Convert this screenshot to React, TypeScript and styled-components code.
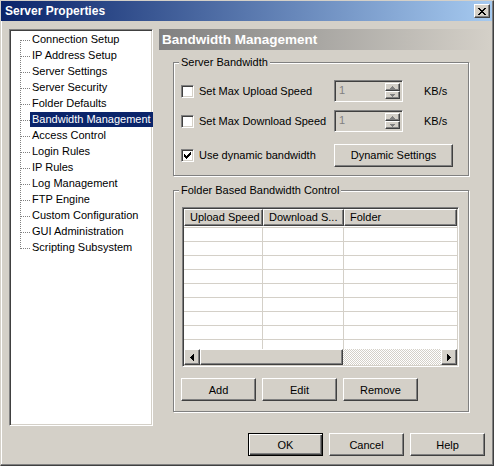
import React from "react";
import styled, { createGlobalStyle, css } from "styled-components";

const GlobalStyle = createGlobalStyle`
  html, body {
    margin: 0;
    padding: 0;
    background: #d4d0c8;
  }
  body {
    font-family: "Liberation Sans", Arial, sans-serif;
    font-size: 11px;
    color: #000;
  }
  * {
    box-sizing: border-box;
  }
`;

const raised = css`
  border: 1px solid;
  border-color: #fff #404040 #404040 #fff;
  box-shadow: inset -1px -1px 0 #808080, inset 1px 1px 0 #d4d0c8;
`;

const sunken = css`
  border: 1px solid;
  border-color: #808080 #fff #fff #808080;
  box-shadow: inset 1px 1px 0 #404040, inset -1px -1px 0 #d4d0c8;
`;

const Window = styled.div`
  width: 494px;
  height: 466px;
  display: flex;
  flex-direction: column;
  background: #d4d0c8;
  border: 1px solid;
  border-color: #d4d0c8 #404040 #404040 #d4d0c8;
  box-shadow: inset -1px -1px 0 #808080, inset 1px 1px 0 #fff;
`;

const TitleBar = styled.div`
  height: 20px;
  margin-right: 1px;
  display: flex;
  align-items: center;
  justify-content: space-between;
  padding: 0 2px 0 4px;
  background: linear-gradient(to right, #0a246a, #a6caf0);
  color: #fff;
  font-weight: bold;
  font-size: 12px;
`;

const CloseButton = styled.div`
  width: 16px;
  height: 14px;
  display: flex;
  align-items: center;
  justify-content: center;
  background: #d4d0c8;
  ${raised};
`;

const Body = styled.div`
  display: flex;
  gap: 6px;
  height: 397px;
  margin-top: 8px;
  padding: 0 2px 0 8px;
`;

const Tree = styled.div`
  width: 144px;
  height: 100%;
  background: #fff;
  padding: 2px 0 0 2px;
  ${sunken};
`;

const TreeItem = styled.div<{ $first?: boolean; $last?: boolean }>`
  position: relative;
  height: 16px;
  padding-left: 18px;
  display: flex;
  align-items: flex-start;

  &::before {
    content: "";
    position: absolute;
    left: 9px;
    top: 8px;
    width: 9px;
    height: 1px;
    background: repeating-linear-gradient(to right, #808080 0 1px, transparent 1px 2px);
  }

  &::after {
    content: "";
    position: absolute;
    left: 8px;
    top: ${(p) => (p.$first ? "8px" : "0")};
    height: ${(p) => (p.$last ? "9px" : p.$first ? "8px" : "16px")};
    width: 1px;
    background: repeating-linear-gradient(to bottom, #808080 0 1px, transparent 1px 2px);
  }
`;

const TreeLabel = styled.span<{ $selected?: boolean }>`
  height: 15px;
  line-height: 15px;
  padding: 0 2px;
  white-space: nowrap;
  background: ${(p) => (p.$selected ? "#0a246a" : "transparent")};
  color: ${(p) => (p.$selected ? "#fff" : "#000")};
`;

const Pane = styled.div`
  width: 331px;
  display: flex;
  flex-direction: column;
`;

const PaneHeader = styled.div`
  height: 21px;
  line-height: 21px;
  padding-left: 3px;
  background: linear-gradient(to right, #808080, #d4d0c8);
  color: #fff;
  font-weight: bold;
  font-size: 13.5px;
`;

const Group = styled.div<{ $height: number; $top: number; $inset: number }>`
  position: relative;
  width: 296px;
  height: ${(p) => p.$height}px;
  margin: ${(p) => p.$top}px 0 0 14px;
  border: 1px solid #808080;
  box-shadow: inset 1px 1px 0 #fff, 1px 1px 0 #fff;
  padding: ${(p) => p.$inset}px 0 0 7px;
`;

const GroupCaption = styled.span`
  position: absolute;
  top: -7px;
  left: 5px;
  padding: 0 2px;
  line-height: 13px;
  background: #d4d0c8;
`;

const SettingRow = styled.div<{ $gap?: number }>`
  display: flex;
  align-items: center;
  height: 22px;
  margin-top: ${(p) => p.$gap ?? 0}px;
`;

const CheckField = styled.label`
  width: 153px;
  display: flex;
  align-items: center;
  gap: 5px;
  white-space: nowrap;
`;

const CheckBox = styled.span`
  width: 13px;
  height: 13px;
  background: #fff;
  display: flex;
  align-items: center;
  justify-content: center;
  ${sunken};
`;

const SpinField = styled.div`
  width: 69px;
  height: 22px;
  display: flex;
  justify-content: space-between;
  padding: 2px;
  background: #d4d0c8;
  color: #808080;
  ${sunken};
`;

const SpinValue = styled.span`
  padding-left: 2px;
  line-height: 15px;
`;

const SpinButtons = styled.div`
  display: flex;
  flex-direction: column;
`;

const SpinButton = styled.div`
  width: 15px;
  height: 9px;
  display: flex;
  align-items: center;
  justify-content: center;
  ${raised};
`;

const Unit = styled.span`
  margin-left: 21px;
`;

const Button = styled.button<{ $width?: number; $default?: boolean }>`
  width: ${(p) => p.$width ?? 75}px;
  height: 23px;
  padding: 0;
  font: inherit;
  color: #000;
  background: #d4d0c8;
  ${(p) =>
    p.$default
      ? css`
          border: 1px solid #000;
          box-shadow: inset 1px 1px 0 #fff, inset -1px -1px 0 #404040, inset -2px -2px 0 #808080;
        `
      : raised};
`;

const ListView = styled.div`
  width: 277px;
  height: 160px;
  margin-left: 1px;
  padding: 1px;
  background: #fff;
  display: flex;
  flex-direction: column;
  overflow: hidden;
  ${sunken};
`;

const ListHeader = styled.div`
  display: flex;
  height: 17px;
  flex-shrink: 0;
`;

const HeaderCell = styled.div<{ $width?: number }>`
  ${(p) => (p.$width ? `width: ${p.$width}px;` : "flex: 1;")}
  height: 17px;
  line-height: 15px;
  padding-left: 5px;
  background: #d4d0c8;
  white-space: nowrap;
  overflow: hidden;
  ${raised};
`;

const ListBody = styled.div`
  flex: 1;
  overflow: hidden;
  padding-top: 1px;
`;

const ListRow = styled.div`
  display: flex;
  height: 14px;
  border-top: 1px solid #d4d0c8;
`;

const ListCell = styled.div<{ $width?: number }>`
  ${(p) => (p.$width ? `width: ${p.$width}px; border-right: 1px solid #d4d0c8;` : "flex: 1;")}
`;

const ScrollBar = styled.div`
  display: flex;
  height: 16px;
  flex-shrink: 0;
`;

const ScrollArrow = styled.div`
  width: 16px;
  height: 16px;
  display: flex;
  align-items: center;
  justify-content: center;
  background: #d4d0c8;
  ${raised};
`;

const ScrollThumb = styled.div`
  width: 143px;
  height: 16px;
  background: #d4d0c8;
  ${raised};
`;

const ScrollTrack = styled.div`
  flex: 1;
  background: repeating-conic-gradient(#fff 0 25%, #d4d0c8 0 50%) 0 0 / 2px 2px;
`;

const ButtonRow = styled.div`
  display: flex;
  gap: 6px;
  margin-top: 11px;
`;

const Footer = styled.div`
  display: flex;
  justify-content: flex-end;
  gap: 6px;
  margin-top: 7px;
  padding-right: 8px;
`;

const CheckMark = () => (
  <svg width="7" height="7" viewBox="0 0 7 7" shapeRendering="crispEdges">
    <path
      d="M0 2h1v1h1v1h1v-1h1v-1h1v-1h1v-1h1v3h-1v1h-1v1h-1v1h-1v1h-1v-1h-1v-1h-1v-1h-1z"
      fill="#000"
    />
  </svg>
);

const CloseGlyph = () => (
  <svg width="8" height="7" viewBox="0 0 8 7" shapeRendering="crispEdges">
    <path
      d="M0 0h2v1h1v1h2v-1h1v-1h2v1h-1v1h-1v1h-1v1h1v1h1v1h1v1h-2v-1h-1v-1h-2v1h-1v1h-2v-1h1v-1h1v-1h1v-1h-1v-1h-1v-1h-1z"
      fill="#000"
    />
  </svg>
);

const Arrow = ({ dir, color }: { dir: "left" | "right" | "up" | "down"; color: string }) => {
  const shapes = {
    left: { w: 4, h: 7, d: "M4 0v7h-1v-1h-1v-1h-1v-1h-1v-1h1v-1h1v-1h1v-1z" },
    right: { w: 4, h: 7, d: "M0 0h1v1h1v1h1v1h1v1h-1v1h-1v1h-1v1h-1z" },
    up: { w: 5, h: 3, d: "M2 0h1v1h1v1h1v1h-5v-1h1v-1h1z" },
    down: { w: 5, h: 3, d: "M0 0h5v1h-1v1h-1v1h-1v-1h-1v-1h-1z" },
  }[dir];
  return (
    <svg width={shapes.w} height={shapes.h} viewBox={`0 0 ${shapes.w} ${shapes.h}`} shapeRendering="crispEdges">
      <path d={shapes.d} fill={color} />
    </svg>
  );
};

const treeItems = [
  "Connection Setup",
  "IP Address Setup",
  "Server Settings",
  "Server Security",
  "Folder Defaults",
  "Bandwidth Management",
  "Access Control",
  "Login Rules",
  "IP Rules",
  "Log Management",
  "FTP Engine",
  "Custom Configuration",
  "GUI Administration",
  "Scripting Subsystem",
];

const speedRows = [
  { label: "Set Max Upload Speed", gap: 0 },
  { label: "Set Max Download Speed", gap: 8 },
];

const Spinner = () => (
  <SpinField>
    <SpinValue>1</SpinValue>
    <SpinButtons>
      <SpinButton>
        <Arrow dir="up" color="#808080" />
      </SpinButton>
      <SpinButton>
        <Arrow dir="down" color="#808080" />
      </SpinButton>
    </SpinButtons>
  </SpinField>
);

export default function App() {
  return (
    <>
      <GlobalStyle />
      <Window>
        <TitleBar>
          <span>Server Properties</span>
          <CloseButton>
            <CloseGlyph />
          </CloseButton>
        </TitleBar>

        <Body>
          <Tree>
            {treeItems.map((item, i) => (
              <TreeItem key={item} $first={i === 0} $last={i === treeItems.length - 1}>
                <TreeLabel $selected={item === "Bandwidth Management"}>{item}</TreeLabel>
              </TreeItem>
            ))}
          </Tree>

          <Pane>
            <PaneHeader>Bandwidth Management</PaneHeader>

            <Group $height={114} $top={12} $inset={17}>
              <GroupCaption>Server Bandwidth</GroupCaption>
              {speedRows.map((row) => (
                <SettingRow key={row.label} $gap={row.gap}>
                  <CheckField>
                    <CheckBox />
                    {row.label}
                  </CheckField>
                  <Spinner />
                  <Unit>KB/s</Unit>
                </SettingRow>
              ))}
              <SettingRow $gap={12}>
                <CheckField>
                  <CheckBox>
                    <CheckMark />
                  </CheckBox>
                  Use dynamic bandwidth
                </CheckField>
                <Button $width={119}>Dynamic Settings</Button>
              </SettingRow>
            </Group>

            <Group $height={222} $top={14} $inset={16}>
              <GroupCaption>Folder Based Bandwidth Control</GroupCaption>
              <ListView>
                <ListHeader>
                  <HeaderCell $width={79}>Upload Speed</HeaderCell>
                  <HeaderCell $width={81}>Download S...</HeaderCell>
                  <HeaderCell>Folder</HeaderCell>
                </ListHeader>
                <ListBody>
                  {Array.from({ length: 9 }).map((_, i) => (
                    <ListRow key={i}>
                      <ListCell $width={79} />
                      <ListCell $width={81} />
                      <ListCell />
                    </ListRow>
                  ))}
                </ListBody>
                <ScrollBar>
                  <ScrollArrow>
                    <Arrow dir="left" color="#000" />
                  </ScrollArrow>
                  <ScrollThumb />
                  <ScrollTrack />
                  <ScrollArrow>
                    <Arrow dir="right" color="#000" />
                  </ScrollArrow>
                </ScrollBar>
              </ListView>
              <ButtonRow>
                <Button>Add</Button>
                <Button>Edit</Button>
                <Button>Remove</Button>
              </ButtonRow>
            </Group>
          </Pane>
        </Body>

        <Footer>
          <Button $default>OK</Button>
          <Button>Cancel</Button>
          <Button>Help</Button>
        </Footer>
      </Window>
    </>
  );
}
